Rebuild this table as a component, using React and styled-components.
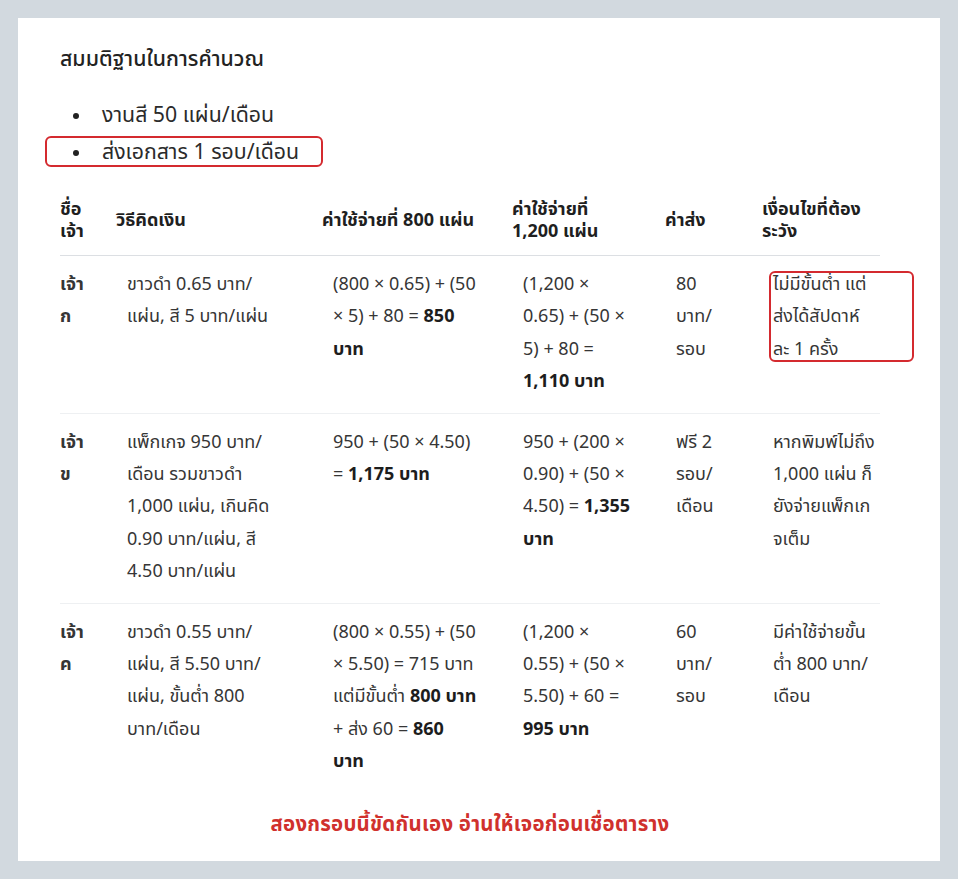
import React from 'react';
import styled, { createGlobalStyle } from 'styled-components';

const GlobalStyle = createGlobalStyle`
  html, body {
    margin: 0;
    padding: 0;
    background: #d2d9df;
  }
  body {
    padding: 18px;
    font-family: "Noto Sans Thai", "Noto Sans", sans-serif;
    color: #2b2b2b;
  }
`;

const Card = styled.div`
  width: 922px;
  height: 843px;
  box-sizing: border-box;
  background: #ffffff;
  padding: 28px 60px 0 42px;
`;

const Title = styled.h3`
  margin: 0;
  font-size: 21.3px;
  line-height: 28px;
  font-weight: 500;
  color: #222;
`;

const Bullets = styled.ul`
  margin: 23px 0 0;
  padding-left: 42px;
  list-style: none;
  font-size: 21.3px;
  line-height: 37px;
  color: #2b2b2b;
`;

const Item = styled.li`
  position: relative;

  &::before {
    content: '';
    position: absolute;
    left: -29px;
    top: 16px;
    width: 6px;
    height: 6px;
    border-radius: 50%;
    background: #222;
  }
`;

const Marked = styled.span`
  position: relative;
  display: inline-block;

  &::after {
    content: '';
    position: absolute;
    left: -57px;
    right: -24px;
    top: 2px;
    bottom: 4px;
    border: 2px solid #d42a2f;
    border-radius: 6px;
    pointer-events: none;
  }
`;

const Table = styled.table`
  width: 820px;
  margin-top: 16px;
  border-collapse: collapse;
  table-layout: fixed;
  font-size: 18px;
`;

const Head = styled.th`
  text-align: left;
  vertical-align: middle;
  white-space: nowrap;
  font-weight: 700;
  line-height: 22px;
  color: #1f1f1f;
  padding: 12px 0;
  border-bottom: 1.5px solid #dcdfe3;
`;

const Row = styled.tr`
  border-bottom: 1px solid ${p => (p.$last ? 'transparent' : '#eef0f2')};
`;

const Cell = styled.td`
  vertical-align: top;
  white-space: nowrap;
  line-height: 32.4px;
  color: #363636;
  padding: 13px 0 14px ${p => (p.$first ? 0 : 11)}px;
  font-weight: ${p => (p.$first ? 700 : 400)};

  b {
    font-weight: 700;
    color: #1d1d1d;
  }
`;

const Boxed = styled.span`
  position: relative;
  display: inline-block;

  &::after {
    content: '';
    position: absolute;
    left: -4px;
    width: 141px;
    top: 2px;
    bottom: 4px;
    border: 2px solid #d42a2f;
    border-radius: 6px;
    pointer-events: none;
  }
`;

const Note = styled.p`
  margin: 19px 0 0;
  width: 820px;
  text-align: center;
  font-size: 20.4px;
  letter-spacing: 0.25px;
  line-height: 24px;
  font-weight: 700;
  color: #d0312d;
`;

const widths = [56, 206, 190, 153, 97, 118];

const heads = [
  ['ชื่อ', 'เจ้า'],
  ['วิธีคิดเงิน'],
  ['ค่าใช้จ่ายที่ 800 แผ่น'],
  ['ค่าใช้จ่ายที่', '1,200 แผ่น'],
  ['ค่าส่ง'],
  ['เงื่อนไขที่ต้อง', 'ระวัง'],
];

// each cell is listed line by line, as it wraps in the screenshot
const rows = [
  [
    ['เจ้า', 'ก'],
    ['ขาวดำ 0.65 บาท/', 'แผ่น, สี 5 บาท/แผ่น'],
    ['(800 × 0.65) + (50', <>× 5) + 80 = <b>850</b></>, <b>บาท</b>],
    ['(1,200 ×', '0.65) + (50 ×', '5) + 80 =', <b>1,110 บาท</b>],
    ['80', 'บาท/', 'รอบ'],
    { boxed: true, lines: ['ไม่มีขั้นต่ำ แต่', 'ส่งได้สัปดาห์', 'ละ 1 ครั้ง'] },
  ],
  [
    ['เจ้า', 'ข'],
    ['แพ็กเกจ 950 บาท/', 'เดือน รวมขาวดำ', '1,000 แผ่น, เกินคิด', '0.90 บาท/แผ่น, สี', '4.50 บาท/แผ่น'],
    ['950 + (50 × 4.50)', <>= <b>1,175 บาท</b></>],
    ['950 + (200 ×', '0.90) + (50 ×', <>4.50) = <b>1,355</b></>, <b>บาท</b>],
    ['ฟรี 2', 'รอบ/', 'เดือน'],
    ['หากพิมพ์ไม่ถึง', '1,000 แผ่น ก็', 'ยังจ่ายแพ็กเก', 'จเต็ม'],
  ],
  [
    ['เจ้า', 'ค'],
    ['ขาวดำ 0.55 บาท/', 'แผ่น, สี 5.50 บาท/', 'แผ่น, ขั้นต่ำ 800', 'บาท/เดือน'],
    ['(800 × 0.55) + (50', '× 5.50) = 715 บาท', <>แต่มีขั้นต่ำ <b>800 บาท</b></>, <>+ ส่ง 60 = <b>860</b></>, <b>บาท</b>],
    ['(1,200 ×', '0.55) + (50 ×', '5.50) + 60 =', <b>995 บาท</b>],
    ['60', 'บาท/', 'รอบ'],
    ['มีค่าใช้จ่ายขั้น', 'ต่ำ 800 บาท/', 'เดือน'],
  ],
];

const Lines = ({ lines }) =>
  lines.map((l, i) => (
    <React.Fragment key={i}>
      {i > 0 && <br />}
      {l}
    </React.Fragment>
  ));

export default function App() {
  return (
    <>
      <GlobalStyle />
      <Card>
        <Title>สมมติฐานในการคำนวณ</Title>
        <Bullets>
          <Item>งานสี 50 แผ่น/เดือน</Item>
          <Item><Marked>ส่งเอกสาร 1 รอบ/เดือน</Marked></Item>
        </Bullets>
        <Table>
          <colgroup>
            {widths.map((w, i) => <col key={i} style={{ width: w }} />)}
          </colgroup>
          <thead>
            <tr>
              {heads.map((h, i) => (
                <Head key={i}><Lines lines={h} /></Head>
              ))}
            </tr>
          </thead>
          <tbody>
            {rows.map((r, ri) => (
              <Row key={ri} $last={ri === rows.length - 1}>
                {r.map((c, ci) => (
                  <Cell key={ci} $first={ci === 0}>
                    {c.boxed
                      ? <Boxed><Lines lines={c.lines} /></Boxed>
                      : <Lines lines={c} />}
                  </Cell>
                ))}
              </Row>
            ))}
          </tbody>
        </Table>
        <Note>สองกรอบนี้ขัดกันเอง อ่านให้เจอก่อนเชื่อตาราง</Note>
      </Card>
    </>
  );
}
